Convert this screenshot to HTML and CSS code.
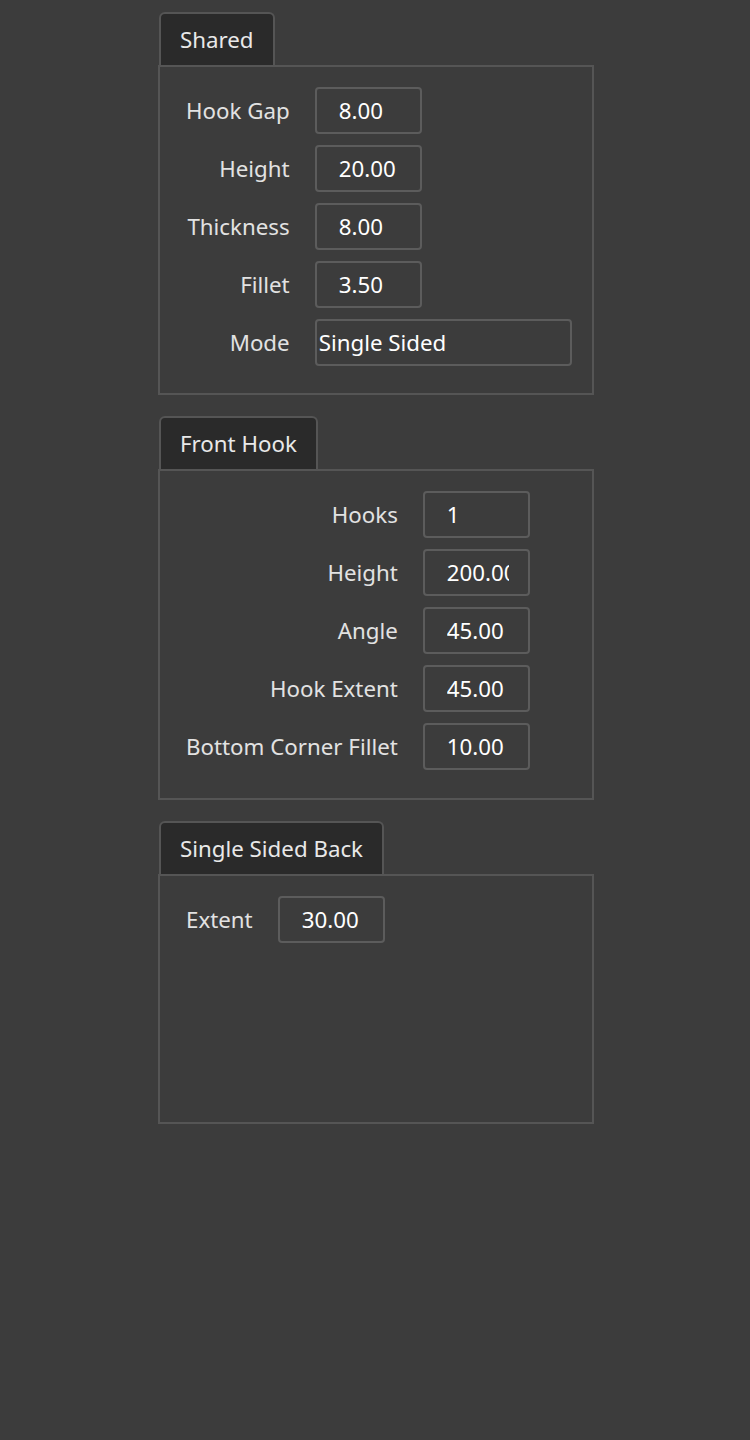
FILE: index.html
```html
<!DOCTYPE html>
<html>
<head>
<meta charset="utf-8">
<link rel="stylesheet" href="styles.css">
</head>
<body>
<div class="page">
  <section class="group">
    <div class="tab">Shared</div>
    <div class="panel panel-shared">
      <div class="form">
        <div class="label">Hook Gap</div><div class="field"><span class="value">8.00</span></div>
        <div class="label">Height</div><div class="field"><span class="value">20.00</span></div>
        <div class="label">Thickness</div><div class="field"><span class="value">8.00</span></div>
        <div class="label">Fillet</div><div class="field"><span class="value">3.50</span></div>
        <div class="label">Mode</div><div class="field field-combo"><span class="value">Single Sided</span></div>
      </div>
    </div>
  </section>
  <section class="group">
    <div class="tab">Front Hook</div>
    <div class="panel panel-front">
      <div class="form">
        <div class="label">Hooks</div><div class="field"><span class="value">1</span></div>
        <div class="label">Height</div><div class="field"><span class="value">200.00</span></div>
        <div class="label">Angle</div><div class="field"><span class="value">45.00</span></div>
        <div class="label">Hook Extent</div><div class="field"><span class="value">45.00</span></div>
        <div class="label">Bottom Corner Fillet</div><div class="field"><span class="value">10.00</span></div>
      </div>
    </div>
  </section>
  <section class="group">
    <div class="tab">Single Sided Back</div>
    <div class="panel panel-back">
      <div class="form">
        <div class="label">Extent</div><div class="field"><span class="value">30.00</span></div>
      </div>
    </div>
  </section>
</div>
</body>
</html>
```

FILE: styles.css
```css
html, body {
  margin: 0;
  padding: 0;
  background: #3c3c3c;
  height: 100%;
}
body {
  font-family: "Noto Sans", "Open Sans", sans-serif;
  font-size: 22.3px;
  color: #e2e2e2;
}
.page {
  padding: 12px 0 0 158px;
  display: flex;
  flex-direction: column;
  gap: 21px;
}
.group {
  width: 436px;
  display: flex;
  flex-direction: column;
}
.tab {
  align-self: flex-start;
  box-sizing: border-box;
  height: 53px;
  margin-left: 1px;
  padding: 0 19px 0 19px;
  line-height: 51px;
  background: #2a2a2a;
  border: 2px solid #555555;
  border-bottom: none;
  border-radius: 6px 6px 0 0;
  color: #e8e8e8;
}
.panel {
  box-sizing: border-box;
  border: 2px solid #555555;
  padding: 20px 20px 0 26px;
}
.panel-shared { height: 330px; }
.panel-front { height: 331px; }
.panel-back { height: 250px; }
.form {
  display: grid;
  grid-template-columns: max-content max-content;
  column-gap: 25px;
  row-gap: 11px;
  align-items: center;
}
.label {
  text-align: right;
  white-space: nowrap;
}
.field {
  box-sizing: border-box;
  width: 107px;
  height: 47px;
  border: 2px solid #5c5c5c;
  border-radius: 4px;
  padding: 0 19px 0 22px;
  line-height: 43px;
  color: #ffffff;
}
.value {
  display: block;
  white-space: nowrap;
  overflow: hidden;
}
.field-combo {
  width: 257px;
  padding-left: 2px;
}
```
